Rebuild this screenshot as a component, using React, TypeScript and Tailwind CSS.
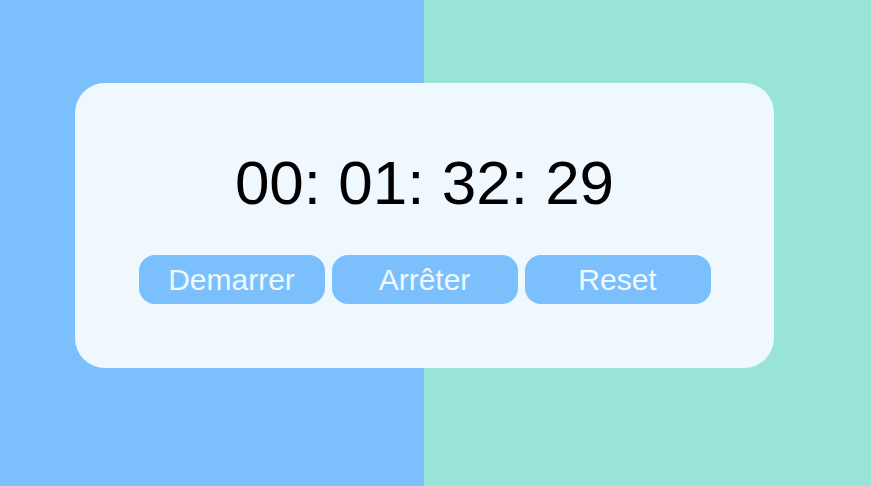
import React from 'react';

const BUTTONS = ['Demarrer', 'Arrêter', 'Reset'];

export default function App() {
  return (
    <div className="h-[486px] w-full bg-[linear-gradient(to_right,#7bc0fc_424px,#98e4d6_424px)] pt-[83px] pl-[75px] font-['Liberation_Sans',Arial,sans-serif]">
      <div className="flex h-[285px] w-[699px] flex-col items-center rounded-[30px] bg-[#eff7ff] pt-[65px]">
        <div className="text-[62px] leading-[69px] text-black">00: 01: 32: 29</div>
        <div className="mt-[38px] flex gap-[7px]">
          {BUTTONS.map((label) => (
            <button
              key={label}
              className="flex h-[49px] w-[186px] items-center justify-center rounded-[16px] bg-[#7bc0fc] text-[30px] text-[#f0f8ff]"
            >
              {label}
            </button>
          ))}
        </div>
      </div>
    </div>
  );
}
